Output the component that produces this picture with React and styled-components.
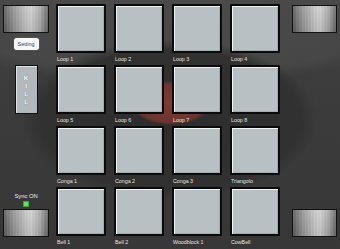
import React from "react";
import styled, { createGlobalStyle } from "styled-components";

const pads = [
	"Loop 1", "Loop 2", "Loop 3", "Loop 4",
	"Loop 5", "Loop 6", "Loop 7", "Loop 8",
	"Conga 1", "Conga 2", "Conga 3", "Triangolo",
	"Bell 1", "Bell 2", "Woodblock 1", "CowBell",
];

const GlobalStyle = createGlobalStyle`
	html, body {
		margin: 0;
		padding: 0;
		background: #383838;
		font-family: "Liberation Sans", Arial, sans-serif;
	}
`;

const Page = styled.div`
	position: relative;
	width: 340px;
	height: 249px;
	overflow: hidden;
	display: flex;
	background:
		radial-gradient(ellipse 40px 22px at 171px 103px, #7d3c37 0, #6c3430 88%, rgba(108, 52, 48, 0) 100%),
		radial-gradient(ellipse 148px 80px at 170px 120px, #2d2d2d 0, #313131 88%, rgba(49, 49, 49, 0) 100%),
		radial-gradient(ellipse 300px 100px at 170px -15px, #4b4b4b 0, #474747 88%, rgba(71, 71, 71, 0) 100%),
		linear-gradient(180deg, #3f3f3f 0%, #3a3a3a 60%, #373737 100%);
`;

const SideColumn = styled.div`
	display: flex;
	flex-direction: column;
	align-items: center;
	width: ${(p) => p.$width}px;
	padding: 5px ${(p) => p.$right}px 12px ${(p) => p.$left}px;
	box-sizing: border-box;
`;

const Metal = styled.div`
	width: ${(p) => p.$width}px;
	height: 28px;
	box-sizing: border-box;
	border: 1.5px solid #111;
	background:
		repeating-linear-gradient(90deg, rgba(255, 255, 255, 0.035) 0 1px, rgba(0, 0, 0, 0.03) 1px 3px),
		linear-gradient(180deg, rgba(255, 255, 255, 0.1), rgba(0, 0, 0, 0.08)),
		linear-gradient(90deg, #5e5e5e 0%, #959595 22%, #c6c6c6 50%, #d2d2d2 62%, #ababab 82%, #666 100%);
`;

const SettingButton = styled.button`
	margin-top: 5px;
	width: 25px;
	height: 12px;
	padding: 0;
	border: none;
	border-radius: 3px;
	background: #f7f7f7;
	box-shadow: 0 0 1px rgba(255, 255, 255, 0.6);
	color: #2d3b5c;
	font-family: "Liberation Sans", Arial, sans-serif;
	font-size: 5.4px;
	line-height: 12px;
`;

const KillButton = styled.div`
	margin-top: 15px;
	width: 23px;
	height: 49px;
	box-sizing: border-box;
	border: 1.5px solid #0e0e0e;
	background: #b2b8bb;
	box-shadow: inset 1px 1px 0 #dfe4e6;
	display: flex;
	flex-direction: column;
	align-items: center;
	padding-top: 9px;
	gap: 2px;
	color: #ffffff;
	font-size: 6px;
	font-weight: bold;
	line-height: 6px;
	text-shadow: 0 0 1px rgba(0, 0, 0, 0.4);
`;

const Spacer = styled.div`
	flex: 1;
`;

const SyncLabel = styled.div`
	color: #f0f0f0;
	font-size: 5.8px;
	line-height: 7px;
`;

const SyncLed = styled.div`
	margin: 1px 0 2px;
	width: 6px;
	height: 6px;
	box-sizing: border-box;
	background: #5ee35a;
	border: 1px solid #3aa838;
`;

const PadGrid = styled.div`
	display: grid;
	grid-template-columns: repeat(4, 50px);
	grid-auto-rows: 61px;
	column-gap: 8px;
	padding-top: 4px;
	margin-left: 4px;
`;

const PadCell = styled.div`
	display: flex;
	flex-direction: column;
`;

const Pad = styled.div`
	width: 50px;
	height: 49px;
	box-sizing: border-box;
	border: 2px solid #0b0b0b;
	border-radius: 1px;
	background: #b9c0c3;
	box-shadow: inset 1px 1px 0 #eef3f4, inset -1px -1px 0 #a4abae;
`;

const PadLabel = styled.div`
	padding-left: 1px;
	color: #e6e6e6;
	font-size: 5.3px;
	line-height: 12px;
	white-space: nowrap;
`;

export default function App() {
	return (
		<>
			<GlobalStyle />
			<Page>
				<SideColumn $width={52} $left={0} $right={0}>
					<Metal $width={46} />
					<SettingButton>Setting</SettingButton>
					<KillButton>
						<span>K</span>
						<span>I</span>
						<span>L</span>
						<span>L</span>
					</KillButton>
					<Spacer />
					<SyncLabel>Sync ON</SyncLabel>
					<SyncLed />
					<Metal $width={46} />
				</SideColumn>
				<PadGrid>
					{pads.map((name) => (
						<PadCell key={name}>
							<Pad />
							<PadLabel>{name}</PadLabel>
						</PadCell>
					))}
				</PadGrid>
				<SideColumn $width={60} $left={12} $right={3}>
					<Metal $width={45} />
					<Spacer />
					<Metal $width={45} />
				</SideColumn>
			</Page>
		</>
	);
}
